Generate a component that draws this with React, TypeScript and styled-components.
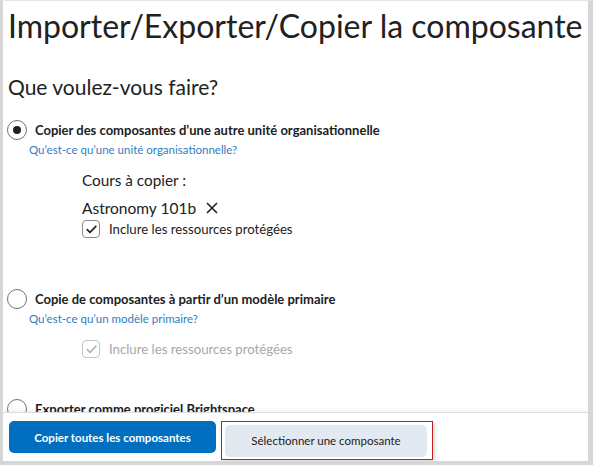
import styled, { createGlobalStyle } from "styled-components";

const GlobalStyle = createGlobalStyle`
  html, body {
    margin: 0;
    padding: 0;
    background: #ffffff;
  }
  body {
    font-family: Lato, "Noto Sans", "Liberation Sans", sans-serif;
    color: #202122;
  }
`;

const COLORS = {
  text: "#202122",
  link: "#2f7dc3",
  blue: "#006fbf",
  frame: "#d6d6d6",
  line: "#d9dde3",
  grey: "#e3e9f1",
  border: "#868a8f",
  disabled: "#a6a8ab",
  red: "#c8191f",
};

const Frame = styled.div`
  box-sizing: border-box;
  width: 593px;
  height: 465px;
  border-left: 3px solid ${COLORS.frame};
  border-right: 5px solid ${COLORS.frame};
  border-bottom: 4px solid ${COLORS.frame};
  border-top: 1px solid #e6e6e6;
  display: flex;
  flex-direction: column;
  overflow: hidden;
  position: relative;
`;

const Scroll = styled.div`
  flex: 1;
  overflow: hidden;
  padding: 0 0 0 4px;
`;

const Title = styled.h1`
  margin: 6px 0 0 1px;
  font-size: 32px;
  font-weight: 400;
  line-height: 38px;
  white-space: nowrap;
`;

const Question = styled.h2`
  margin: 28px 0 0 1px;
  font-size: 21px;
  font-weight: 400;
  line-height: 28px;
`;

const Option = styled.div<{ $gap: number }>`
  margin-top: ${(p) => p.$gap}px;
`;

const RadioRow = styled.label`
  display: flex;
  align-items: center;
  gap: 8px;
  height: 20px;
`;

const Radio = styled.span<{ $checked?: boolean }>`
  box-sizing: border-box;
  width: 20px;
  height: 20px;
  border-radius: 50%;
  border: 1.5px solid #6e7377;
  display: flex;
  align-items: center;
  justify-content: center;
  background: #fff;
  flex-shrink: 0;

  &::after {
    content: "";
    display: ${(p) => (p.$checked ? "block" : "none")};
    width: 8px;
    height: 8px;
    border-radius: 50%;
    background: ${COLORS.text};
  }
`;

const OptionLabel = styled.span`
  font-size: 13px;
  font-weight: 700;
  white-space: nowrap;
`;

const HelpLink = styled.a`
  display: block;
  margin: 3px 0 0 22px;
  font-size: 11.5px;
  line-height: 14px;
  color: ${COLORS.link};
  text-decoration: none;
`;

const Indented = styled.div<{ $top: number }>`
  padding-left: 75px;
  margin-top: ${(p) => p.$top}px;
`;

const FieldLabel = styled.div`
  font-size: 15.3px;
  line-height: 20px;
`;

const CourseRow = styled.div`
  display: flex;
  align-items: center;
  gap: 10px;
  margin-top: 8px;
  font-size: 15.5px;
  line-height: 20px;
`;

const RemoveIcon = styled.svg`
  width: 12px;
  height: 12px;
`;

const CheckRow = styled.div<{ $disabled?: boolean }>`
  display: flex;
  align-items: center;
  gap: 9px;
  margin-top: 2px;
  font-size: 13.2px;
  color: ${(p) => (p.$disabled ? COLORS.disabled : COLORS.text)};
`;

const CheckBox = styled.span<{ $disabled?: boolean }>`
  box-sizing: border-box;
  width: 18px;
  height: 18px;
  border-radius: 4px;
  border: 1.3px solid ${(p) => (p.$disabled ? "#c2c4c7" : COLORS.border)};
  display: flex;
  align-items: center;
  justify-content: center;
  background: #fff;
  flex-shrink: 0;
`;

const Footer = styled.div`
  flex-shrink: 0;
  height: 48px;
  border-top: 1px solid ${COLORS.line};
  box-shadow: 0 -2px 4px rgba(0, 0, 0, 0.06);
  background: #fff;
  display: flex;
  align-items: center;
  gap: 5px;
  padding: 0 0 0 6px;
  position: relative;
  z-index: 1;
`;

const Button = styled.button<{ $primary?: boolean }>`
  height: 32px;
  border: none;
  border-radius: 5px;
  font-family: Lato, "Noto Sans", "Liberation Sans", sans-serif;
  font-size: 11.5px;
  font-weight: ${(p) => (p.$primary ? 700 : 400)};
  color: ${(p) => (p.$primary ? "#ffffff" : COLORS.text)};
  background: ${(p) => (p.$primary ? COLORS.blue : COLORS.grey)};
  width: ${(p) => (p.$primary ? 207 : 202)}px;
  cursor: pointer;
`;

const Highlight = styled.div`
  border: 1.5px solid ${COLORS.red};
  padding: 3px 5px 2px 3px;
  margin-top: 6px;
  box-shadow: 2px 2px 4px rgba(0, 0, 0, 0.15);
`;

const Check = ({ disabled }: { disabled?: boolean }) => (
  <CheckBox $disabled={disabled}>
    <svg width="11" height="9" viewBox="0 0 11 9">
      <path
        d="M1.2 4.6 L4 7.4 L9.8 1.4"
        fill="none"
        stroke={disabled ? "#b4b6b9" : COLORS.text}
        strokeWidth="1.7"
        strokeLinecap="round"
        strokeLinejoin="round"
      />
    </svg>
  </CheckBox>
);

const App = () => {
  return (
    <>
      <GlobalStyle />
      <Frame>
        <Scroll>
          <Title>Importer/Exporter/Copier la composante</Title>
          <Question>Que voulez-vous faire?</Question>

          <Option $gap={19}>
            <RadioRow>
              <Radio $checked />
              <OptionLabel>Copier des composantes d’une autre unité organisationnelle</OptionLabel>
            </RadioRow>
            <HelpLink>Qu’est-ce qu’une unité organisationnelle?</HelpLink>
            <Indented $top={13}>
              <FieldLabel>Cours à copier :</FieldLabel>
              <CourseRow>
                Astronomy 101b
                <RemoveIcon viewBox="0 0 12 12">
                  <path d="M1 1 L11 11 M11 1 L1 11" stroke={COLORS.text} strokeWidth="1.6" />
                </RemoveIcon>
              </CourseRow>
              <CheckRow>
                <Check />
                Inclure les ressources protégées
              </CheckRow>
            </Indented>
          </Option>

          <Option $gap={51}>
            <RadioRow>
              <Radio />
              <OptionLabel>Copie de composantes à partir d’un modèle primaire</OptionLabel>
            </RadioRow>
            <HelpLink>Qu’est-ce qu’un modèle primaire?</HelpLink>
            <Indented $top={14}>
              <CheckRow $disabled>
                <Check disabled />
                Inclure les ressources protégées
              </CheckRow>
            </Indented>
          </Option>

          <Option $gap={41}>
            <RadioRow>
              <Radio />
              <OptionLabel>Exporter comme progiciel Brightspace</OptionLabel>
            </RadioRow>
          </Option>
        </Scroll>
        <Footer>
          <Button $primary>Copier toutes les composantes</Button>
          <Highlight>
            <Button>Sélectionner une composante</Button>
          </Highlight>
        </Footer>
      </Frame>
    </>
  );
};

export default App;
